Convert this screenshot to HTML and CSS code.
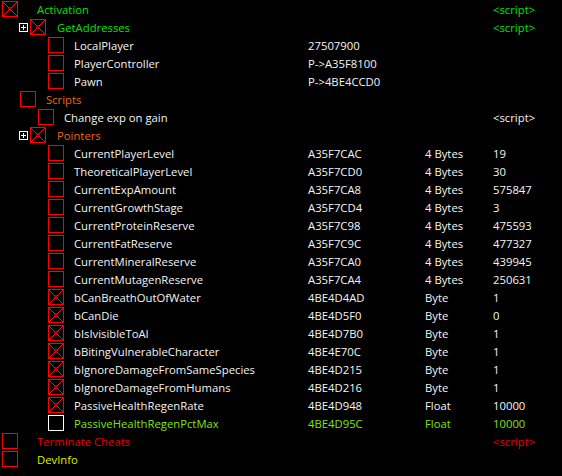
FILE: index.html
```html
<!DOCTYPE html>
<html>
<head>
<meta charset="utf-8">
<link rel="stylesheet" href="styles.css">
</head>
<body>
<div class="table">
  <div class="row"><div class="tree l0"><span class="cb x"></span><span class="name green">Activation</span></div><div class="addr"></div><div class="type"></div><div class="val green">&lt;script&gt;</div></div>
  <div class="row"><div class="tree l1"><span class="exp"></span><span class="cb x"></span><span class="name green">GetAddresses</span></div><div class="addr"></div><div class="type"></div><div class="val green">&lt;script&gt;</div></div>
  <div class="row"><div class="tree l2"><span class="cb"></span><span class="name">LocalPlayer</span></div><div class="addr">27507900</div><div class="type"></div><div class="val"></div></div>
  <div class="row"><div class="tree l2"><span class="cb"></span><span class="name">PlayerController</span></div><div class="addr">P-&gt;A35F8100</div><div class="type"></div><div class="val"></div></div>
  <div class="row"><div class="tree l2"><span class="cb"></span><span class="name">Pawn</span></div><div class="addr">P-&gt;4BE4CCD0</div><div class="type"></div><div class="val"></div></div>
  <div class="row"><div class="tree ls"><span class="cb"></span><span class="name orange">Scripts</span></div><div class="addr"></div><div class="type"></div><div class="val"></div></div>
  <div class="row"><div class="tree lc"><span class="cb"></span><span class="name">Change exp on gain</span></div><div class="addr"></div><div class="type"></div><div class="val">&lt;script&gt;</div></div>
  <div class="row"><div class="tree l1"><span class="exp"></span><span class="cb x"></span><span class="name orange">Pointers</span></div><div class="addr"></div><div class="type"></div><div class="val"></div></div>
  <div class="row"><div class="tree l2"><span class="cb"></span><span class="name">CurrentPlayerLevel</span></div><div class="addr">A35F7CAC</div><div class="type">4 Bytes</div><div class="val">19</div></div>
  <div class="row"><div class="tree l2"><span class="cb"></span><span class="name">TheoreticalPlayerLevel</span></div><div class="addr">A35F7CD0</div><div class="type">4 Bytes</div><div class="val">30</div></div>
  <div class="row"><div class="tree l2"><span class="cb"></span><span class="name">CurrentExpAmount</span></div><div class="addr">A35F7CA8</div><div class="type">4 Bytes</div><div class="val">575847</div></div>
  <div class="row"><div class="tree l2"><span class="cb"></span><span class="name">CurrentGrowthStage</span></div><div class="addr">A35F7CD4</div><div class="type">4 Bytes</div><div class="val">3</div></div>
  <div class="row"><div class="tree l2"><span class="cb"></span><span class="name">CurrentProteinReserve</span></div><div class="addr">A35F7C98</div><div class="type">4 Bytes</div><div class="val">475593</div></div>
  <div class="row"><div class="tree l2"><span class="cb"></span><span class="name">CurrentFatReserve</span></div><div class="addr">A35F7C9C</div><div class="type">4 Bytes</div><div class="val">477327</div></div>
  <div class="row"><div class="tree l2"><span class="cb"></span><span class="name">CurrentMineralReserve</span></div><div class="addr">A35F7CA0</div><div class="type">4 Bytes</div><div class="val">439945</div></div>
  <div class="row"><div class="tree l2"><span class="cb"></span><span class="name">CurrentMutagenReserve</span></div><div class="addr">A35F7CA4</div><div class="type">4 Bytes</div><div class="val">250631</div></div>
  <div class="row"><div class="tree l2"><span class="cb x"></span><span class="name">bCanBreathOutOfWater</span></div><div class="addr">4BE4D4AD</div><div class="type">Byte</div><div class="val">1</div></div>
  <div class="row"><div class="tree l2"><span class="cb x"></span><span class="name">bCanDie</span></div><div class="addr">4BE4D5F0</div><div class="type">Byte</div><div class="val">0</div></div>
  <div class="row"><div class="tree l2"><span class="cb x"></span><span class="name">bIsIvisibleToAI</span></div><div class="addr">4BE4D7B0</div><div class="type">Byte</div><div class="val">1</div></div>
  <div class="row"><div class="tree l2"><span class="cb x"></span><span class="name">bBitingVulnerableCharacter</span></div><div class="addr">4BE4E70C</div><div class="type">Byte</div><div class="val">1</div></div>
  <div class="row"><div class="tree l2"><span class="cb x"></span><span class="name">bIgnoreDamageFromSameSpecies</span></div><div class="addr">4BE4D215</div><div class="type">Byte</div><div class="val">1</div></div>
  <div class="row"><div class="tree l2"><span class="cb x"></span><span class="name">bIgnoreDamageFromHumans</span></div><div class="addr">4BE4D216</div><div class="type">Byte</div><div class="val">1</div></div>
  <div class="row"><div class="tree l2"><span class="cb x"></span><span class="name">PassiveHealthRegenRate</span></div><div class="addr">4BE4D948</div><div class="type">Float</div><div class="val">10000</div></div>
  <div class="row lime"><div class="tree l2"><span class="cb white"></span><span class="name">PassiveHealthRegenPctMax</span></div><div class="addr">4BE4D95C</div><div class="type">Float</div><div class="val">10000</div></div>
  <div class="row"><div class="tree l0"><span class="cb"></span><span class="name red">Terminate Cheats</span></div><div class="addr"></div><div class="type"></div><div class="val red">&lt;script&gt;</div></div>
  <div class="row"><div class="tree l0"><span class="cb"></span><span class="name yellow">DevInfo</span></div><div class="addr"></div><div class="type"></div><div class="val"></div></div>
</div>
</body>
</html>
```
FILE: styles.css
```css
*, *::before, *::after { box-sizing: border-box; }
html, body {
  margin: 0;
  padding: 0;
  background: #000;
  height: 100%;
}
.table {
  font-family: "Open Sans", "Noto Sans", sans-serif;
  font-size: 11.3px;
  color: #f4f4f4;
}
.row {
  display: flex;
  align-items: center;
  height: 18px;
  white-space: nowrap;
}
.tree {
  width: 308px;
  display: flex;
  align-items: center;
  flex: none;
}
.addr { width: 117px; flex: none; }
.type { width: 68px; flex: none; }
.val { flex: 1; }
.cb {
  width: 16px;
  height: 16px;
  border: 1px solid #ff0000;
  flex: none;
  position: relative;
}
.cb.white { border-color: #ffffff; }
.cb.x {
  background:
    radial-gradient(circle at center, #c00000 0 1.5px, transparent 2px),
    linear-gradient(45deg, transparent calc(50% - 0.6px), #ff1010 calc(50% - 0.6px) calc(50% + 0.6px), transparent calc(50% + 0.6px)),
    linear-gradient(-45deg, transparent calc(50% - 0.6px), #ff1010 calc(50% - 0.6px) calc(50% + 0.6px), transparent calc(50% + 0.6px));
}
.exp {
  width: 9px;
  height: 9px;
  border: 1px solid #fff;
  flex: none;
  margin-right: 2px;
  position: relative;
}
.exp::before, .exp::after {
  content: "";
  position: absolute;
  background: #fff;
}
.exp::before { left: 1px; top: 3px; width: 5px; height: 1px; }
.exp::after { left: 3px; top: 1px; width: 1px; height: 5px; }
.l0 { padding-left: 2px; }
.l0 .name { margin-left: 19px; }
.l1 { padding-left: 19px; }
.l1 .name { margin-left: 11px; }
.l2 { padding-left: 48px; }
.l2 .name { margin-left: 10px; }
.ls { padding-left: 20px; }
.ls .name { margin-left: 10px; }
.lc { padding-left: 38px; }
.lc .name { margin-left: 10px; }
.green { color: #0ae00a; }
.orange { color: #ee6418; }
.red { color: #e80000; }
.yellow { color: #e0ec00; }
.lime { color: #80e020; }
```
